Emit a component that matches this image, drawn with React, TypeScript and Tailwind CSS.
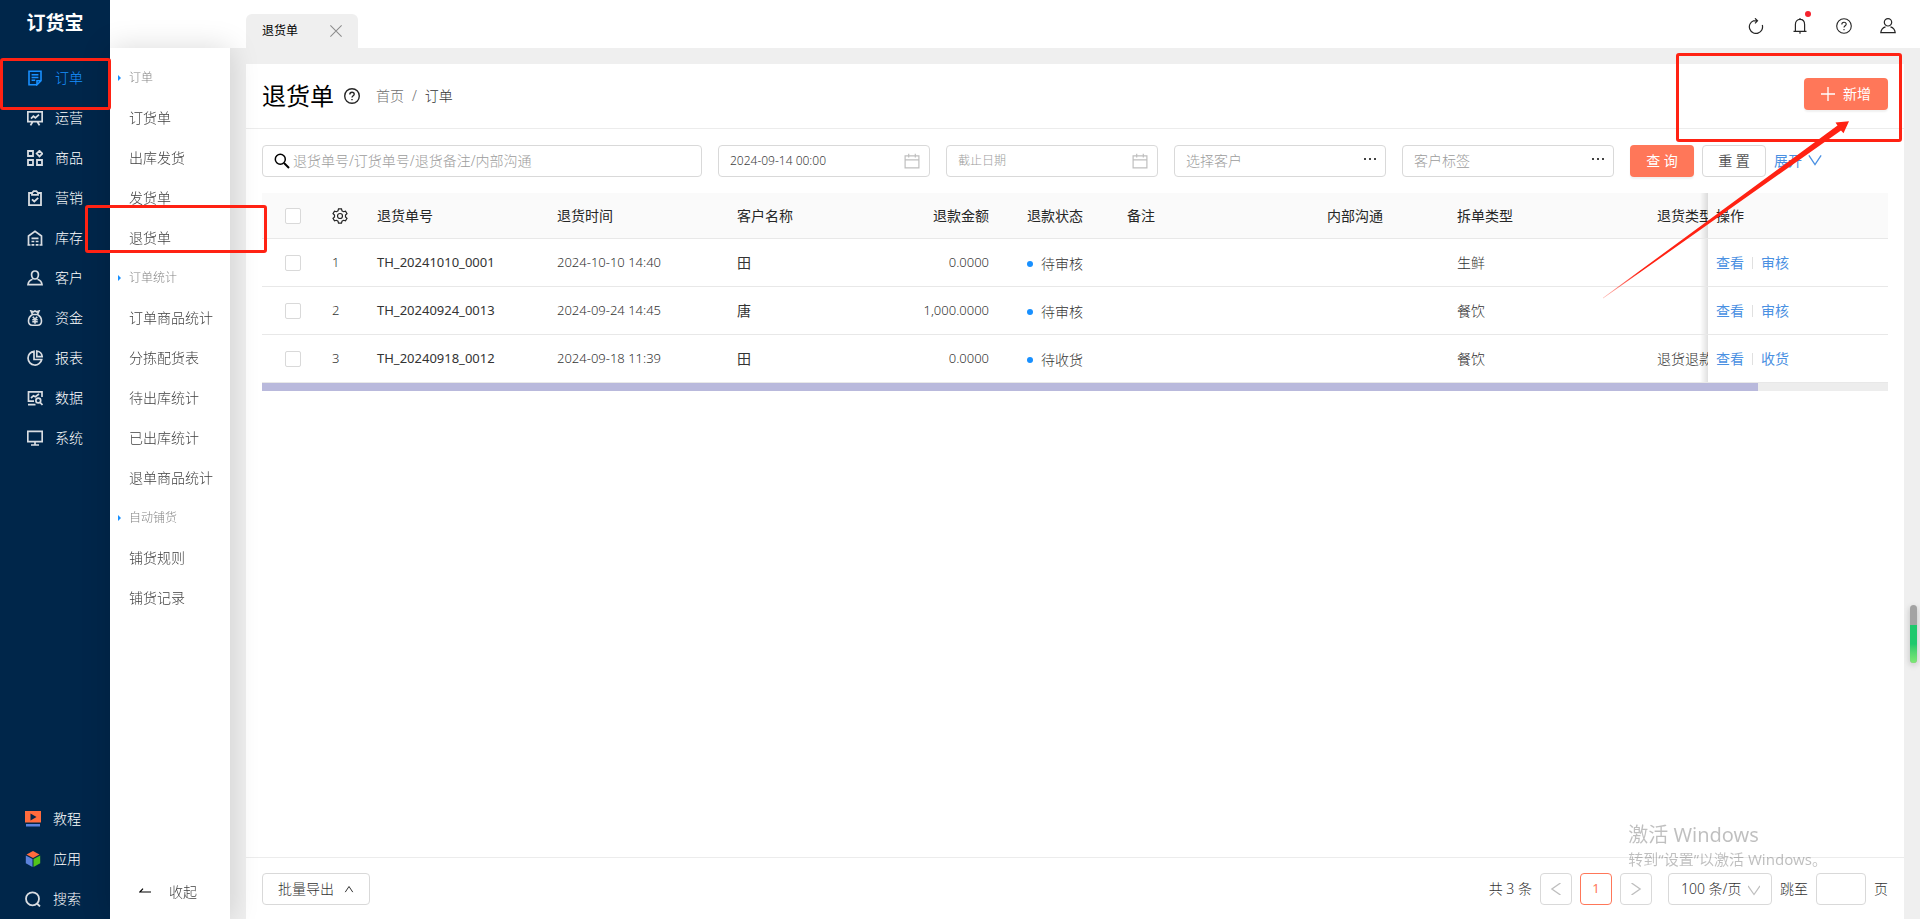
import type { ReactNode } from "react";

type IconProps = { children: ReactNode; className?: string; strokeWidth?: number };

type MenuItem = { label: string; icon: ReactNode; active?: boolean };

type ReturnOrder = {
  id: number;
  code: string;
  time: string;
  customer: string;
  amount: string;
  status: string;
  splitType: string;
  returnType: string;
  action: string;
};

function Icon({ children, className = "size-4", strokeWidth = 1.4 }: IconProps) {
  return (
    <svg className={`shrink-0 ${className}`} viewBox="0 0 16 16" fill="none" stroke="currentColor" strokeWidth={strokeWidth} aria-hidden="true">
      {children}
    </svg>
  );
}

const mainMenu: MenuItem[] = [
  {
    label: "订单",
    active: true,
    icon: (
      <Icon strokeWidth={1.6}>
        <path d="M10 14.7H2V1.3h12v9.4l-4 4v-4h4M4.6 4.8h6.8M4.6 7.5h6.8M4.6 10.2h3.6" />
      </Icon>
    ),
  },
  {
    label: "运营",
    icon: (
      <Icon strokeWidth={1.8}>
        <path d="M.8 1.8h14.4v9.8H.8zM5.5 12l-2 3.4M10.5 12l2 3.4M4 8.6l2.4-2.4 2 1.6L12 4.6" />
      </Icon>
    ),
  },
  {
    label: "商品",
    icon: (
      <Icon strokeWidth={1.8}>
        <path d="M1 1h5v5H1zM1 10h5v5H1zM10 10h5v5h-5zM12.5.8l2.8 2.8-2.8 2.8-2.8-2.8z" />
      </Icon>
    ),
  },
  {
    label: "营销",
    icon: (
      <Icon strokeWidth={1.8}>
        <path d="M4.5 3H2v12.2h12V3h-2.5M5 4.8V3l1.6-1.8h2.8L11 3v1.8zM5 9.3l2.3 2.2 3.9-3.7" />
      </Icon>
    ),
  },
  {
    label: "库存",
    icon: (
      <Icon strokeWidth={1.7}>
        <path d="M1.5 15.5V6L8 1.3 14.5 6v9.5M.5 15h3M12.5 15h3M4.5 8.3h7M4.5 11.5h2.8M8.7 11.5h2.8M4.5 14.8h2.8M8.7 14.8h2.8" />
      </Icon>
    ),
  },
  {
    label: "客户",
    icon: (
      <Icon strokeWidth={1.7}>
        <path d="M8 1c2.3 0 3.6 1.7 3.4 4C11.2 7.3 9.8 9 8 9S4.8 7.3 4.6 5C4.4 2.7 5.7 1 8 1zM5.5 9.2C3 10 1.3 11.7 1 14.7h14c-.3-3-2-4.7-4.5-5.5" />
      </Icon>
    ),
  },
  {
    label: "资金",
    icon: (
      <Icon strokeWidth={1.6}>
        <path d="M5.5 4.5 4 1l2.5.8L8 1l1.5.8L12 1l-1.5 3.5zM5.5 4.5C3 6 1.5 8.5 1.5 11c0 2.8 1.5 4.2 4 4.2h5c2.5 0 4-1.4 4-4.2 0-2.5-1.5-5-4-6.5M5.8 6.8 8 9.3l2.2-2.5M5.3 9.8h5.4M5.3 11.8h5.4M8 9.3v4.4" />
      </Icon>
    ),
  },
  {
    label: "报表",
    icon: (
      <Icon strokeWidth={1.7}>
        <path d="M7 1.3A6.9 6.9 0 1 0 14.7 9.5H7zM9.8 1v5.7h5.4A6.3 6.3 0 0 0 9.8 1z" />
      </Icon>
    ),
  },
  {
    label: "数据",
    icon: (
      <Icon strokeWidth={1.7}>
        <path d="M15 7V1.8H1.5v9.4H7M1 14.7h7.5M4 8l2.5-2.3 1.8 1L12 4" />
        <circle cx="11.3" cy="10.5" r="2.4" />
        <path d="m13 12.3 2.5 2.7" />
      </Icon>
    ),
  },
  {
    label: "系统",
    icon: (
      <Icon strokeWidth={1.7}>
        <path d="M.8 1.3h14.4v10.4H.8zM8 12v2.8M4 15h8" />
      </Icon>
    ),
  },
];

const toolMenu: MenuItem[] = [
  {
    label: "教程",
    icon: (
      <svg className="size-4 shrink-0" viewBox="0 0 16 16" aria-hidden="true">
        <path d="M0 0h16v11.5H0z" fill="#ff6b3d" />
        <path d="M5.5 2.5v7l6-3.5z" fill="#00264a" />
        <path d="M1 13h14v2.5H1z" fill="#5b82dc" />
      </svg>
    ),
  },
  {
    label: "应用",
    icon: (
      <svg className="size-4 shrink-0" viewBox="0 0 16 16" aria-hidden="true">
        <path d="M8 0l6.5 3.5L8 7 1.5 3.5z" fill="#ff6b3d" />
        <path d="M.8 4.500 7.500 8v8L.8 12.300z" fill="#5b82dc" />
        <path d="M15.200 4.500 8.500 8v8l6.700-3.700z" fill="#52c41a" />
      </svg>
    ),
  },
  {
    label: "搜索",
    icon: (
      <Icon strokeWidth={1.8}>
        <circle cx="7.5" cy="7.8" r="6.5" />
        <path d="m12 12.500 3 3" />
      </Icon>
    ),
  },
];

const subMenu = [
  { title: "订单", items: ["订货单", "出库发货", "发货单", "退货单"] },
  { title: "订单统计", items: ["订单商品统计", "分拣配货表", "待出库统计", "已出库统计", "退单商品统计"] },
  { title: "自动铺货", items: ["铺货规则", "铺货记录"] },
];

const orders: ReturnOrder[] = [
  { id: 1, code: "TH_20241010_0001", time: "2024-10-10 14:40", customer: "田", amount: "0.0000", status: "待审核", splitType: "生鲜", returnType: "", action: "审核" },
  { id: 2, code: "TH_20240924_0013", time: "2024-09-24 14:45", customer: "唐", amount: "1,000.0000", status: "待审核", splitType: "餐饮", returnType: "", action: "审核" },
  { id: 3, code: "TH_20240918_0012", time: "2024-09-18 11:39", customer: "田", amount: "0.0000", status: "待收货", splitType: "餐饮", returnType: "退货退款", action: "收货" },
];

const fieldClass = "flex h-8 items-center rounded border border-[#d9d9d9] bg-white pl-[11px] pr-[9px]";
const inputClass = "w-full min-w-0 bg-transparent outline-none placeholder:text-[#9c9c9c]";
const checkboxClass = "block size-4 appearance-none rounded-[2px] border border-[#d9d9d9] bg-white";
const pagerClass = "flex size-8 items-center justify-center rounded border bg-white";
const actionCellClass =
  "sticky right-0 border-b border-[#e8e8e8] px-2 before:absolute before:inset-y-0 before:-left-2 before:w-2 before:bg-linear-to-l before:from-black/12 before:to-transparent";

function QuestionIcon({ strokeWidth }: { strokeWidth: number }) {
  return (
    <Icon strokeWidth={strokeWidth}>
      <circle cx="8" cy="8" r="7.3" />
      <path d="M5.8 6.4C5.8 5 6.7 4.2 8 4.2s2.2.8 2.2 2c0 1.5-2.2 1.7-2.2 3.4M8 10.9v1.3" />
    </Icon>
  );
}

function CalendarIcon() {
  return (
    <Icon className="size-4 text-[#bfbfbf]" strokeWidth={1.2}>
      <path d="M1.1 2.8h13.8v12H1.1zM1.1 6.800h13.8M4.7.8v3.7M11.3.8v3.7" />
    </Icon>
  );
}

function MenuLink({ item }: { item: MenuItem }) {
  return (
    <a href="#" className={`flex h-10 items-center gap-3 ${item.active ? "text-[#1890ff]" : "text-[#d9dde2]"}`}>
      {item.icon}
      <span className={item.active ? "" : "text-white"}>{item.label}</span>
    </a>
  );
}

function Sidebar() {
  return (
    <aside className="flex w-[110px] shrink-0 flex-col bg-[#00264a]">
      <div className="flex h-12 shrink-0 items-center justify-center text-[19px] font-bold text-white">订货宝</div>
      <nav className="pl-[27px] pt-[10px]">
        {mainMenu.map((item) => (
          <MenuLink key={item.label} item={item} />
        ))}
      </nav>
      <nav className="mt-auto pl-[25px]">
        {toolMenu.map((item) => (
          <MenuLink key={item.label} item={item} />
        ))}
      </nav>
    </aside>
  );
}

function SubMenu() {
  return (
    <aside className="relative z-10 flex w-[120px] shrink-0 flex-col bg-white text-[#404040] shadow-[0_0_28px_rgba(0,0,0,0.15)]">
      <nav className="pt-[10px]">
        {subMenu.map((group) => (
          <section key={group.title}>
            <h2 className="flex h-10 items-center pl-2 text-xs text-[#858585]">
              <svg className="h-[6px] w-[11px]" viewBox="0 0 11 6" aria-hidden="true">
                <path d="M0 0l3 3-3 3z" fill="#1890ff" />
              </svg>
              {group.title}
            </h2>
            {group.items.map((label) => (
              <a key={label} href="#" className="flex h-10 items-center pl-[19px]">
                {label}
              </a>
            ))}
          </section>
        ))}
      </nav>
      <button type="button" className="mt-auto flex h-[54px] items-center gap-[18px] pl-[29px]">
        <svg className="h-3 w-3 text-black" viewBox="0 0 12 12" fill="none" stroke="currentColor" aria-hidden="true">
          <path d="M12 6H.8L4 2.7" strokeWidth="1.2" />
        </svg>
        收起
      </button>
    </aside>
  );
}

function TopBar() {
  return (
    <header className="flex h-12 shrink-0 items-end justify-between bg-white pl-[136px] pr-6 text-[#262626]">
      <div className="flex h-[34px] w-28 items-center justify-between rounded-t-md bg-[#efefef] px-4 text-xs font-normal text-black">
        退货单
        <button type="button" aria-label="关闭" className="text-[#8c8c8c]">
          <Icon className="size-3" strokeWidth={1.4}>
            <path d="m.5.5 15 15M15.5.5l-15 15" />
          </Icon>
        </button>
      </div>
      <div className="flex h-11 items-center gap-7">
        <button type="button" aria-label="刷新">
          <Icon strokeWidth={1.2}>
            <path d="M5.5 2.7A6.600 6.600 0 1 0 14.300 7M5 2.800h4.300M7 .3l2.500 2.500L7 5.300" />
          </Icon>
        </button>
        <button type="button" aria-label="通知" className="relative">
          <Icon strokeWidth={1.2}>
            <path d="M1.500 13.400h13M3.400 13.400V6.500C3.400 3.500 5.200 1.400 8 1.400s4.600 2.100 4.600 5.100v6.900M8 0v1.400M8 13.400v2.400" />
          </Icon>
          <span className="absolute -right-[3px] -top-[7px] size-[6px] rounded-full bg-[#f5222d]" />
        </button>
        <button type="button" aria-label="帮助">
          <QuestionIcon strokeWidth={1.1} />
        </button>
        <button type="button" aria-label="账号">
          <Icon strokeWidth={1.2}>
            <circle cx="8" cy="4.3" r="3.7" />
            <path d="M5.500 8.800C3 9.500 1.200 11.500.8 14.600h14.400c-.4-3.100-2.200-5.100-4.700-5.800" />
          </Icon>
        </button>
      </div>
    </header>
  );
}

function Filters() {
  return (
    <form className="flex flex-wrap items-center gap-4">
      <label className={`${fieldClass} w-[440px]`}>
        <Icon className="mr-[3px] size-4 text-black" strokeWidth={1.5}>
          <circle cx="6.3" cy="6.3" r="5" />
          <path d="m10 10 5 5" strokeWidth="2" />
        </Icon>
        <input className={inputClass} aria-label="关键词" placeholder="退货单号/订货单号/退货备注/内部沟通" />
      </label>
      <label className={`${fieldClass} w-[212px] text-xs text-[#404040]`}>
        <input className={inputClass} aria-label="开始日期" defaultValue="2024-09-14 00:00" />
        <CalendarIcon />
      </label>
      <label className={`${fieldClass} w-[212px] text-xs text-[#404040]`}>
        <input className={inputClass} aria-label="截止日期" placeholder="截止日期" />
        <CalendarIcon />
      </label>
      {["选择客户", "客户标签"].map((label) => (
        <div key={label} className={`${fieldClass} w-[212px]`}>
          <input className={inputClass} aria-label={label} placeholder={label} />
          <button type="button" aria-label={`更多${label}`} className="pb-1 text-[#434343]">
            <svg className="h-[2px] w-3" viewBox="0 0 12 2" fill="currentColor" aria-hidden="true">
              <path d="M0 0h2v2H0zM5 0h2v2H5zM10 0h2v2h-2z" />
            </svg>
          </button>
        </div>
      ))}
      <div className="flex items-center gap-2 font-normal">
        <button type="button" className="h-8 w-16 rounded bg-[#ff7759] text-white shadow-[0_2px_2px_rgba(0,0,0,0.06)]">
          查 询
        </button>
        <button type="reset" className="h-8 w-16 rounded border border-[#d9d9d9] bg-white text-[#595959]">
          重 置
        </button>
        <button type="button" className="flex items-center gap-[6px] text-[#4a90e2]">
          展开
          <Icon className="size-[14px]" strokeWidth={1.5}>
            <path d="m1 1.500 7 10.500 7-10.500" />
          </Icon>
        </button>
      </div>
    </form>
  );
}

function OrderTable() {
  return (
    <div className="mt-4">
      <div className="overflow-x-auto [scrollbar-width:none]">
        <table className="w-[1767px] table-fixed border-separate border-spacing-0 text-left">
          <colgroup>
            <col className="w-[62px]" />
            <col className="w-[45px]" />
            <col className="w-[180px]" />
            <col className="w-[180px]" />
            <col className="w-[140px]" />
            <col className="w-[150px]" />
            <col className="w-[100px]" />
            <col className="w-[200px]" />
            <col className="w-[130px]" />
            <col className="w-[200px]" />
            <col className="w-[200px]" />
            <col className="w-[180px]" />
          </colgroup>
          <thead className="text-[#262626]">
            <tr className="h-[46px] [&>th]:border-b [&>th]:border-[#e8e8e8] [&>th]:bg-[#fafafa] [&>th]:px-2 [&>th]:font-normal">
              <th>
                <input type="checkbox" aria-label="全选" className={`${checkboxClass} mx-auto`} />
              </th>
              <th>
                <button type="button" aria-label="列设置" className="block">
                  <Icon strokeWidth={1.2}>
                    <path d="M6.500.8h3l.5 2 1.500.9 2-.6L15 5.700l-1.500 1.400v1.800l1.500 1.400-1.500 2.600-2-.6-1.500.9-.5 2h-3l-.5-2-1.500-.9-2 .6L1 10.300l1.500-1.400V7.100L1 5.700l1.500-2.600 2 .6L6 2.800z" />
                    <circle cx="8" cy="8" r="2.5" />
                  </Icon>
                </button>
              </th>
              <th>退货单号</th>
              <th>退货时间</th>
              <th>客户名称</th>
              <th className="pr-[30px]! text-right">退款金额</th>
              <th>退款状态</th>
              <th>备注</th>
              <th>内部沟通</th>
              <th>拆单类型</th>
              <th>退货类型</th>
              <th className={actionCellClass}>操作</th>
            </tr>
          </thead>
          <tbody className="text-[#333333]">
            {orders.map((order) => (
              <tr key={order.id} className="h-12 [&>td]:border-b [&>td]:border-[#e8e8e8] [&>td]:px-2">
                <td>
                  <input type="checkbox" aria-label={`选择${order.code}`} className={`${checkboxClass} mx-auto`} />
                </td>
                <td className="text-[13px]">{order.id}</td>
                <td className="text-[13px] font-normal text-[#333333]">{order.code}</td>
                <td className="text-[13px]">{order.time}</td>
                <td className="font-normal">{order.customer}</td>
                <td className="pr-[30px]! text-right text-[13px]">{order.amount}</td>
                <td>
                  <span className="flex items-center gap-2 pt-[2px]">
                    <span className="size-[6px] rounded-full bg-[#1890ff]" />
                    {order.status}
                  </span>
                </td>
                <td />
                <td />
                <td>{order.splitType}</td>
                <td>{order.returnType}</td>
                <td className={`${actionCellClass} bg-white`}>
                  <div className="flex items-center gap-2 font-normal text-[#4a90e2]">
                    <a href="#">查看</a>
                    <span className="h-3 w-px bg-[#e0e0e0]" />
                    <a href="#">{order.action}</a>
                  </div>
                </td>
              </tr>
            ))}
          </tbody>
        </table>
      </div>
      <div className="h-2 bg-[#ededed]">
        <div className="h-2 w-[92%] bg-[#b9b9dc]" />
      </div>
    </div>
  );
}

function Footer() {
  return (
    <footer className="flex h-[62px] shrink-0 items-center justify-between border-t border-[#ececec] px-4 text-[#333333]">
      <button type="button" className="flex h-8 items-center gap-[10px] rounded border border-[#d9d9d9] px-[15px]">
        批量导出
        <Icon className="size-[10px]" strokeWidth={1.6}>
          <path d="m2 13 6-9 6 9" />
        </Icon>
      </button>
      <div className="flex items-center gap-2">
        <span>共 3 条</span>
        <button type="button" aria-label="上一页" className={`${pagerClass} border-[#d9d9d9] text-[#bfbfbf]`}>
          <Icon className="size-3" strokeWidth={1.8}>
            <path d="M14 0 2.500 8 14 16" />
          </Icon>
        </button>
        <button type="button" className={`${pagerClass} border-[#ff7759] text-[13px] font-normal text-[#ff7759]`}>
          1
        </button>
        <button type="button" aria-label="下一页" className={`${pagerClass} border-[#d9d9d9] text-[#bfbfbf]`}>
          <Icon className="size-3" strokeWidth={1.8}>
            <path d="m2 0 11.500 8L2 16" />
          </Icon>
        </button>
        <div className="relative ml-2">
          <select aria-label="每页条数" className="h-8 w-[104px] appearance-none rounded border border-[#d9d9d9] bg-white pl-3">
            <option>100 条/页</option>
          </select>
          <Icon className="pointer-events-none absolute right-3 top-[11px] size-3 text-[#bfbfbf]" strokeWidth={1.6}>
            <path d="m0 2.500 8 11.500 8-11.500" />
          </Icon>
        </div>
        <label className="flex items-center gap-2">
          跳至
          <input className="h-8 w-[50px] rounded border border-[#d9d9d9] px-2 outline-none" />
          页
        </label>
      </div>
    </footer>
  );
}

function Annotations() {
  return (
    <div className="pointer-events-none absolute inset-0 z-20 overflow-hidden">
      <div className="absolute left-0 top-[58px] h-[52px] w-[111px] rounded-[3px] border-[3px] border-[#ff2213]" />
      <div className="absolute left-[85px] top-[205px] h-12 w-[182px] rounded-[3px] border-[3px] border-[#ff2213]" />
      <div className="absolute right-[18px] top-[53px] h-[89px] w-[226px] rounded-[3px] border-[3px] border-[#ff2213]" />
      <svg className="absolute right-[70px] top-[120px] h-[180px] w-[250px]" viewBox="0 0 250 180" aria-hidden="true">
        <defs>
          <linearGradient id="arrow-fade" gradientUnits="userSpaceOnUse" x1="3" y1="178" x2="40" y2="152">
            <stop offset="0" stopColor="#ff2213" stopOpacity="0.3" />
            <stop offset="1" stopColor="#ff2213" />
          </linearGradient>
        </defs>
        <path d="M3 177.800 237.500 5.500 235.500 2.500 249 1.300 243.500 13.200 241 10.500 3 178.500z" fill="url(#arrow-fade)" />
      </svg>
      <div className="absolute bottom-12 right-[93px] font-normal text-black/25">
        <div className="text-xl leading-6">激活 Windows</div>
        <div className="text-[15px] leading-6">转到“设置”以激活 Windows。</div>
      </div>
      <div className="absolute bottom-[256px] right-[3px] h-[58px] w-[7px] overflow-hidden rounded-full bg-[#a3a3a3] shadow-[0_2px_6px_rgba(0,0,0,0.2)]">
        <div className="mt-5 h-[38px] bg-linear-to-b from-[#1fc96d] from-50% to-[#7de874]" />
      </div>
    </div>
  );
}

export default function App() {
  return (
    <div className="relative flex min-h-screen bg-[#efefef] font-['Noto_Sans','Noto_Sans_CJK_SC',sans-serif] text-sm font-light">
      <Sidebar />
      <div className="flex min-w-0 flex-1 flex-col">
        <TopBar />
        <div className="flex min-h-0 flex-1">
          <SubMenu />
          <main className="mx-4 mt-4 flex min-w-0 flex-1 flex-col bg-white">
            <div className="flex h-[65px] shrink-0 items-center justify-between border-b border-[#ececec] px-4">
              <div className="flex items-center">
                <h1 className="text-2xl font-normal text-black">退货单</h1>
                <button type="button" aria-label="说明" className="ml-[10px] mr-4 text-[#262626]">
                  <QuestionIcon strokeWidth={1.4} />
                </button>
                <nav className="flex items-center gap-2 text-[#707070]">
                  <a href="#">首页</a>
                  <span>/</span>
                  <a href="#" className="text-[#333333]">
                    订单
                  </a>
                </nav>
              </div>
              <button type="button" className="mb-1 flex h-8 w-[84px] items-center justify-center gap-2 rounded bg-[#ff7759] font-normal text-white shadow-[0_2px_2px_rgba(0,0,0,0.06)]">
                <Icon className="size-[14px]" strokeWidth={1.5}>
                  <path d="M8 0v16M0 8h16" />
                </Icon>
                新增
              </button>
            </div>
            <div className="flex-1 p-4">
              <Filters />
              <OrderTable />
            </div>
            <Footer />
          </main>
        </div>
      </div>
      <Annotations />
    </div>
  );
}
